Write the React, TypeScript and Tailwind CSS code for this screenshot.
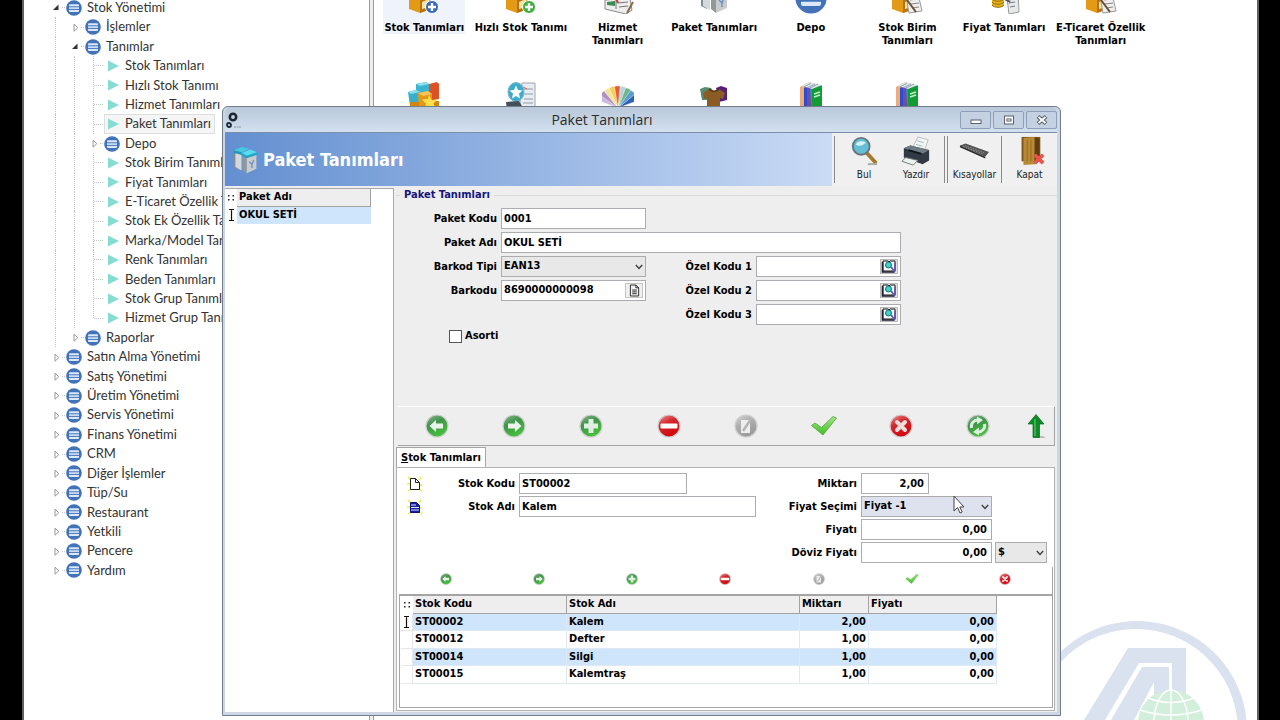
import React, { useId } from "react";

/* ---------- tree ---------- */

type Kind = "open" | "closed" | "leaf" | "last";
type Node = { label: string; depth: number; kind: Kind; selected?: boolean };

const tree: Node[] = [
  { label: "Stok Yönetimi", depth: 0, kind: "open" },
  { label: "İşlemler", depth: 1, kind: "closed" },
  { label: "Tanımlar", depth: 1, kind: "open" },
  { label: "Stok Tanımları", depth: 2, kind: "leaf" },
  { label: "Hızlı Stok Tanımı", depth: 2, kind: "leaf" },
  { label: "Hizmet Tanımları", depth: 2, kind: "leaf" },
  { label: "Paket Tanımları", depth: 2, kind: "leaf", selected: true },
  { label: "Depo", depth: 2, kind: "closed" },
  { label: "Stok Birim Tanımları", depth: 2, kind: "leaf" },
  { label: "Fiyat Tanımları", depth: 2, kind: "leaf" },
  { label: "E-Ticaret Özellik Tanımları", depth: 2, kind: "leaf" },
  { label: "Stok Ek Özellik Tanımları", depth: 2, kind: "leaf" },
  { label: "Marka/Model Tanımları", depth: 2, kind: "leaf" },
  { label: "Renk Tanımları", depth: 2, kind: "leaf" },
  { label: "Beden Tanımları", depth: 2, kind: "leaf" },
  { label: "Stok Grup Tanımları", depth: 2, kind: "leaf" },
  { label: "Hizmet Grup Tanımları", depth: 2, kind: "last" },
  { label: "Raporlar", depth: 1, kind: "closed" },
  { label: "Satın Alma Yönetimi", depth: 0, kind: "closed" },
  { label: "Satış Yönetimi", depth: 0, kind: "closed" },
  { label: "Üretim Yönetimi", depth: 0, kind: "closed" },
  { label: "Servis Yönetimi", depth: 0, kind: "closed" },
  { label: "Finans Yönetimi", depth: 0, kind: "closed" },
  { label: "CRM", depth: 0, kind: "closed" },
  { label: "Diğer İşlemler", depth: 0, kind: "closed" },
  { label: "Tüp/Su", depth: 0, kind: "closed" },
  { label: "Restaurant", depth: 0, kind: "closed" },
  { label: "Yetkili", depth: 0, kind: "closed" },
  { label: "Pencere", depth: 0, kind: "closed" },
  { label: "Yardım", depth: 0, kind: "closed" },
];

function MenuDisc({ className = "size-4" }: { className?: string }) {
  return (
    <svg viewBox="0 0 16 16" className={`${className} shrink-0`}>
      <circle cx="8" cy="8" r="7.8" fill="#4272b8" />
      <rect x="3" y="4.2" width="10" height="7.8" rx="1" fill="#dbe8f8" />
      <path d="M3 6.8h10M3 9.4h10" stroke="#4272b8" strokeWidth="1" />
    </svg>
  );
}

function Expander({ kind }: { kind: Kind }) {
  return (
    <svg viewBox="0 0 19 19" className="h-[19px] w-[19px] shrink-0">
      {kind === "open" && <path d="M11.5 6.5v5.5H6z" fill="#333" />}
      {kind === "closed" && <path d="M8 6.2v7l3.8-3.5z" fill="#fff" stroke="#999" />}
      {(kind === "open" || kind === "closed") && <path d="M15 9.5h4" stroke="#c8c8c8" strokeDasharray="1 1" />}
      {(kind === "leaf" || kind === "last") && (
        <>
          <path d={kind === "last" ? "M8.5 0v10" : "M8.5 0v19"} stroke="#c4c4c4" strokeDasharray="1 1" />
          <path d="M9 9.5h9" stroke="#c4c4c4" strokeDasharray="1 1" />
        </>
      )}
    </svg>
  );
}

function TreeRow({ node }: { node: Node }) {
  const leaf = node.kind === "leaf" || node.kind === "last";
  return (
    <li className="flex min-h-0 flex-1 items-center whitespace-nowrap">
      {Array.from({ length: node.depth }, (_, i) => (
        <span key={i} className="flex w-[19px] shrink-0 self-stretch pl-2">
          <span className="border-l border-dotted border-[#c4c4c4]" />
        </span>
      ))}
      <Expander kind={node.kind} />
      <a
        href="#"
        className={
          node.selected
            ? "flex h-5 items-center gap-[5px] bg-[#f5f5f5] pr-1 outline outline-1 -outline-offset-1 outline-[#dedede]"
            : "flex h-5 items-center gap-[5px]"
        }
      >
        {leaf ? (
          <svg viewBox="0 0 16 16" className="size-4 shrink-0">
            <path d="M4 2.5v11L15 8z" fill="#84dcd3" />
          </svg>
        ) : (
          <MenuDisc />
        )}
        {node.label}
      </a>
    </li>
  );
}

/* ---------- launcher icons ---------- */

function BoxArt({ badge }: { badge: string }) {
  return (
    <g>
      <path d="M1 8l12-4 10 3v20l-11 4-11-4z" fill="#e39a17" />
      <path d="M12 11l11-4v20l-11 4z" fill="#b8730d" />
      <path d="M1 8l11 3 11-4-10-3z" fill="#f8cc62" />
      <path d="M14 20l7-3v8l-7 2z" fill="#f6e3a8" />
      {badge === "paper" ? (
        <>
          <path d="M14 9l12-2 5 22-13 2z" fill="#eeeeee" stroke="#999" />
          <path d="M18 14l8-1M19 18l8-1M20 22l8-1M21 26l7-1" stroke="#888" />
          <path d="M16 18l9 12" stroke="#6a5132" strokeWidth="2" />
        </>
      ) : (
        <>
          <circle cx="24" cy="25" r="6.5" fill={badge} stroke="#fff" />
          <path d="M20 25h8M24 21v8" stroke="#fff" strokeWidth="2.4" />
        </>
      )}
    </g>
  );
}

function PackageArt() {
  return (
    <g>
      <path d="M3 5l6-2v24l-6-3z" fill="#7f8f96" />
      <path d="M5 7l7 3v18l-7-4z" fill="#d3d9dc" />
      <path d="M3 5l9-4 9 2-9 4z" fill="#3fcbe2" />
      <path d="M3 5l9 2v3L3 8z" fill="#2397b4" />
      <path d="M13 10l5 2v19l-5-4z" fill="#8f989c" />
      <path d="M18 11l11-3v18l-11 5z" fill="#c9cbcc" />
      <path d="M12 8l10-4 8 3-12 4z" fill="#55dcee" />
      <path d="M12 8l6 3 12-4v3l-12 4-6-3z" fill="#25a5c5" />
      <path d="M21 18l3 3 2-5M24 21v4" stroke="#638fc2" strokeWidth="1.4" fill="none" />
    </g>
  );
}

function BooksArt() {
  return (
    <g>
      <path d="M5 5l7-4v28l-7 3z" fill="#efaa7b" />
      <path d="M9 6l8-5v29l-8 2z" fill="#294ed0" />
      <path d="M12 7l7-5v29l-7 1z" fill="#774aa2" />
      <path d="M15 8l7-6 4 2v27l-9 1z" fill="#2a8de0" />
      <path d="M17 7l10-4v27l-10 2z" fill="#119b35" />
      <path d="M6 4l8-4 13 3-10 4-3-1z" fill="#dfe6e2" />
      <path d="M9 5l7-4M12 6l8-4M15 6l8-4" stroke="#7e8fa8" strokeWidth=".8" />
      <path d="M19 12l6-2M19 15l6-2" stroke="#c4f1c9" strokeWidth="1.6" />
    </g>
  );
}

const fanColors = ["#c9b9dd", "#b48fc1", "#efe59a", "#f6cf5a", "#e45c3f", "#b7d4dc", "#6fb68a", "#5b9bd2", "#2e62b8"];

function LauncherArt({ name }: { name: string }) {
  switch (name) {
    case "box-blue":
      return <BoxArt badge="#3568c0" />;
    case "box-green":
      return <BoxArt badge="#3daf3b" />;
    case "box-paper":
      return <BoxArt badge="paper" />;
    case "package":
      return <PackageArt />;
    case "books":
      return <BooksArt />;
    case "service":
      return (
        <g>
          <path d="M3 8l23-3 4 23-6 4L3 27z" fill="#eeeeee" stroke="#888" />
          <path d="M5 20l8-1v5l-8-1z" fill="#388c55" />
          <path d="M14 10v17M3 18l25-2M16 21l10-1M17 25l9-1" stroke="#777" />
          <path d="M13 14l3 7" stroke="#d33" strokeWidth="2" />
          <path d="M31 20l-6 11" stroke="#8b6b45" strokeWidth="2" />
        </g>
      );
    case "price":
      return (
        <g>
          <path d="M4 14v9c0 3 12 3 12 0v-9z" fill="#e6b31d" />
          <path d="M4 17c2 3 10 3 12 0M4 20c2 3 10 3 12 0M4 23c2 3 10 3 12 0" stroke="#94690b" fill="none" />
          <ellipse cx="10" cy="14" rx="6" ry="2.5" fill="#ffe06a" />
          <path d="M18 8l12-1 1 23-10 2z" fill="#e6e9ec" stroke="#999" />
          <path d="M21 18l6-1M21 21l6-1M22 25l5-1" stroke="#777" />
          <path d="M13 15l9 5" stroke="#555" strokeWidth="2" />
        </g>
      );
    case "cubes":
      return (
        <g>
          <path d="M8 2l10-2 3 2v12H8z" fill="#3bb5cf" />
          <path d="M21 2l8-2 2 2v15l-10 2z" fill="#dc5225" />
          <path d="M0 10l8-2 4 2v16l-10-2z" fill="#38afcb" />
          <path d="M10 11l10-2 4 3v19H11z" fill="#e29a16" />
          <path d="M2 20h9v10H2zM22 19h9v12h-9z" fill="#d3860f" />
          <path d="M8 2l10-2 3 2-9 2zM0 10l8-2 4 2-9 2z" fill="#8be0ee" />
          <path d="M10 11l10-2 4 3-9 2z" fill="#f4c45a" />
          <path d="M21 13l2.5 5 6-.5-4 4 2.5 5.5-6-2.5-5 3 1-6-4-4 6-.5z" fill="#ffe04b" />
        </g>
      );
    case "globe":
      return (
        <g>
          <path d="M17 1h13v30H14z" fill="#e8edf3" stroke="#9aa5b1" />
          <path d="M19 7h9M19 12h9M19 17h9M18 21h10M18 25h9" stroke="#aeb6bf" strokeWidth="1.6" />
          <path d="M18 5l4 2" stroke="#d55" />
          <ellipse cx="11" cy="10" rx="8" ry="9.5" fill="#3daccc" stroke="#7fb4c9" />
          <path d="M11 3.5l2 4.5 4.5.5-3.5 3 1 5-4-2.5-4 2.5 1-5-3.5-3 4.5-.5z" fill="#fff" />
          <path d="M1 20l13-1 3 5-15 4z" fill="#44505a" />
        </g>
      );
    case "fan":
      return (
        <g>
          {fanColors.map((c, i) => (
            <path key={c} d="M16 27L12.500 5.500q3.500-1.500 7 0z" fill={c} stroke="#fff" strokeWidth=".4" transform={`translate(0 -1) scale(1) rotate(${i * 15 - 60} 16 27) `} />
          ))}
        </g>
      );
    case "shirts":
      return (
        <g>
          <path d="M2 7l5-2 6 1 3 4v8H4z" fill="#568b75" />
          <path d="M18 6l5-2 6 2v12l-8 2z" fill="#57207c" />
          <path d="M5 11l6-4c3 2 7 2 10 0l6 4-2 6-3-1v15H9V16l-3 1z" fill="#8a5c23" />
          <path d="M11 7c3 3 7 3 10 0" stroke="#4d3212" fill="none" strokeWidth="1.6" />
        </g>
      );
    default:
      return null;
  }
}

const launchers = [
  { label: "Stok Tanımları", icon: "box-blue" },
  { label: "Hızlı Stok Tanımı", icon: "box-green" },
  { label: "Hizmet\nTanımları", icon: "service" },
  { label: "Paket Tanımları", icon: "package" },
  { label: "Depo", icon: "disc" },
  { label: "Stok Birim\nTanımları", icon: "box-paper" },
  { label: "Fiyat Tanımları", icon: "price" },
  { label: "E-Ticaret Özellik\nTanımları", icon: "box-paper" },
  { label: "", icon: "cubes" },
  { label: "", icon: "globe" },
  { label: "", icon: "fan" },
  { label: "", icon: "shirts" },
  { label: "", icon: "books" },
  { label: "", icon: "books" },
];

function Launcher({ label, icon, first }: { label: string; icon: string; first: boolean }) {
  return (
    <button type="button" className="flex h-[100px] flex-col items-center text-center">
      <span
        className={
          first
            ? "flex flex-col items-center gap-[7px] bg-[#eff3fc] px-[1px]"
            : "flex flex-col items-center gap-[7px]"
        }
      >
        {icon === "disc" ? (
          <MenuDisc className="size-8" />
        ) : (
          <svg viewBox="0 0 32 32" className="size-8">
            <LauncherArt name={icon} />
          </svg>
        )}
        {label && <span className="leading-[13px] whitespace-pre">{label}</span>}
      </span>
    </button>
  );
}

function Watermark() {
  return (
    <svg viewBox="0 0 200 100" className="absolute right-0 bottom-0 h-[100px] w-[200px]">
      <path
        fillRule="evenodd"
        fill="#dbe2ef"
        d="M80 1a110 110 0 1 0 .1 0zM79 9a102 102 0 1 1-.1 0z"
      />
      <path fill="#dbe2ef" d="M71 28h58v46q-6-3-14-3V43H82L48 100H27z" />
      <path fill="#dbe2ef" d="M85 47h27v25q-8 0-15 4V62L77 100H54z" />
      <circle cx="114" cy="103" r="33" fill="#d3efdb" />
      <g fill="none" stroke="#fff" strokeWidth="1.4">
        <path d="M114 70v33M83 90q31 10 62 0M91 78q23 9 46 0" />
        <ellipse cx="114" cy="103" rx="17" ry="33" />
      </g>
    </svg>
  );
}

/* ---------- dialog icons ---------- */

type Action = "prev" | "next" | "add" | "remove" | "edit" | "ok" | "cancel" | "refresh" | "up";

const actionTitles: Record<Action, string> = {
  prev: "Önceki",
  next: "Sonraki",
  add: "Ekle",
  remove: "Sil",
  edit: "Düzenle",
  ok: "Kaydet",
  cancel: "İptal",
  refresh: "Yenile",
  up: "Yukarı",
};

function ActionIcon({ name, className }: { name: Action; className: string }) {
  const id = useId();
  const tones =
    name === "remove" || name === "cancel"
      ? ["#ee9a9a", "#d3262b", "#d2080f"]
      : name === "edit"
        ? ["#d9d9d9", "#aeaeae", "#9a9a9a"]
        : ["#8fb796", "#3f9448", "#45c03c"];
  const arrow = "M4.500 12l6.500-6v3.500h7v5h-7V18z";
  return (
    <svg viewBox="0 0 24 24" className={className}>
      <defs>
        <linearGradient id={id} x1="0" y1="0" x2="0.5" y2="1">
          <stop offset="0" stopColor={tones[0]} />
          <stop offset=".45" stopColor={tones[1]} />
          <stop offset="1" stopColor={tones[2]} />
        </linearGradient>
        <linearGradient id={`${id}c`} x1="0" y1="0" x2="0" y2="1">
          <stop offset="0" stopColor="#a5e58c" />
          <stop offset="1" stopColor="#3fbf1e" />
        </linearGradient>
      </defs>
      {name === "ok" ? (
        <path d="M-.5 11.500l3.500-2.500 6.500 4.500L21 2.500l3.500 1.500L11 21z" fill={`url(#${id}c)`} stroke="#4fa53a" strokeWidth=".8" />
      ) : name === "up" ? (
        <>
          <path d="M12 24h10l-3-2h-5z" fill="#b9bdb9" />
          <path d="M12 .5l8 9.500h-4.500v13.500H9V10H4z" fill="#0f8a28" stroke="#086a1c" strokeWidth=".7" />
          <path d="M11 5v17" stroke="#43bd54" strokeWidth="1.6" />
        </>
      ) : (
        <>
          <circle cx="12" cy="12" r="11" fill={`url(#${id})`} stroke="#cfcfcf" strokeWidth="1.2" />
          {name === "prev" && <path d={arrow} fill="#e9f3ea" />}
          {name === "next" && <path d={arrow} fill="#e9f3ea" transform="rotate(180 12 12)" />}
          {name === "add" && <path d="M9.5 5h5v4.5H19v5h-4.5V19h-5v-4.500H5v-5h4.500z" fill="#dfeee0" />}
          {name === "remove" && <rect x="3.5" y="9.5" width="17" height="5" rx="1" fill="#fff" />}
          {name === "edit" && (
            <>
              <path d="M7 6h9v13H7z" fill="#ededed" />
              <path d="M17 5l-8 12" stroke="#b5b5b5" strokeWidth="2.5" />
            </>
          )}
          {name === "cancel" && <path d="M8 8l8 8M16 8l-8 8" stroke="#ecdcdc" strokeWidth="4" strokeLinecap="round" />}
          {name === "refresh" && (
            <>
              <path d="M5.500 14a6.500 6.500 0 0 1 6.500-8M18.500 10a6.500 6.500 0 0 1-6.500 8" stroke="#dcefdc" strokeWidth="3" fill="none" />
              <path d="M11 2.500l6 3.500-6 4.500zM13 21.500L7 18l6-4.500z" fill="#dcefdc" />
            </>
          )}
        </>
      )}
    </svg>
  );
}

function ActionButton({ name, small }: { name: Action; small?: boolean }) {
  return (
    <button type="button" aria-label={actionTitles[name]} className="flex items-center justify-center">
      <ActionIcon name={name} className={small ? "size-3 overflow-visible" : "size-6 overflow-visible"} />
    </button>
  );
}

function ToolButton({ label, className, children }: { label: string; className: string; children: React.ReactNode }) {
  return (
    <button type="button" className={`flex flex-col items-center gap-[3px] ${className}`}>
      <svg viewBox="0 0 32 32" className="size-[30px]">
        {children}
      </svg>
      <span className="text-[10px] leading-3 font-normal text-[#222]">{label}</span>
    </button>
  );
}

/* ---------- form parts ---------- */

const box = "h-[21px] min-w-0 border border-[#abadb3] bg-white px-[2px] outline-none";

function Field({
  label,
  labelClass,
  inputClass,
  value,
  right,
  extra,
}: {
  label: string;
  labelClass: string;
  inputClass: string;
  value?: string;
  right?: boolean;
  extra?: React.ReactNode;
}) {
  const id = useId();
  return (
    <div className="flex h-5 items-center gap-1">
      <label htmlFor={id} className={`shrink-0 pt-[2px] text-right whitespace-nowrap ${labelClass}`}>
        {label}
      </label>
      {extra ? (
        <div className={`flex items-center ${box} ${inputClass}`}>
          <input id={id} defaultValue={value} className="min-w-0 flex-1 bg-transparent outline-none" />
          {extra}
        </div>
      ) : (
        <input id={id} defaultValue={value} className={`${box} ${inputClass} ${right ? "pr-1 text-right" : ""}`} />
      )}
    </div>
  );
}

function Drop({ id, label, value, className }: { id?: string; label?: string; value: string; className: string }) {
  return (
    <span className={`relative flex h-[21px] ${className}`}>
      <select id={id} aria-label={label} className="w-full appearance-none border border-[#acacac] bg-transparent px-[2px] outline-none">
        <option>{value}</option>
      </select>
      <svg viewBox="0 0 8 6" className="pointer-events-none absolute top-[8px] right-[3px] h-[6px] w-2">
        <path d="M.8 1L4 4.5 7.2 1" fill="none" stroke="#444" strokeWidth="1.5" />
      </svg>
    </span>
  );
}

function LookupButton({ label }: { label: string }) {
  return (
    <button type="button" aria-label={label} className="flex h-[15px] w-[18px] shrink-0 items-center justify-center border border-[#bbb] bg-[#e4e4e4]">
      <svg viewBox="0 0 16 14" className="h-[14px] w-4">
        <path d="M2 2h5l1 1 1-1h5v10H2z" fill="#fff" stroke="#111" />
        <path d="M1.500 3v10h12" stroke="#223" strokeWidth="1.6" fill="none" />
        <path d="M10 8l4 5M14 4v8" stroke="#5e5aa8" strokeWidth="1.8" />
        <circle cx="7.5" cy="6" r="3" fill="#35d5d0" stroke="#176e78" />
      </svg>
    </button>
  );
}

function NewDocIcon({ filled }: { filled?: boolean }) {
  return (
    <svg viewBox="0 0 16 16" className="size-4">
      <path d="M1 1l3 3M14 1l-2 3M0 8h3M15 9h-3M1 15l3-2M15 15l-3-2" stroke="#f3ea3a" strokeWidth="1.5" />
      {filled ? (
        <>
          <path d="M3.5 3.5h6l3 3v7h-9z" fill="#1620a0" stroke="#10106a" />
          <path d="M4 6h5M4 8.5h8M4 11h8" stroke="#dfe4ff" />
        </>
      ) : (
        <path d="M3.5 2.5h5l4 4v7h-9zM8.5 2.5v4h4" fill="#fff" stroke="#222" />
      )}
    </svg>
  );
}

function IBeam() {
  return (
    <svg viewBox="0 0 9 12" className="mx-auto h-3 w-[9px]">
      <path d="M2 .5h2l.5.5.5-.5h2M2 11.5h2l.5-.5.5.5h2M4.5 1v10" fill="none" stroke="#111" strokeWidth="1.2" />
    </svg>
  );
}

function Grip() {
  return (
    <svg viewBox="0 0 9 8" className="mx-auto h-2 w-[9px]">
      <path d="M1 1h1.500v1.500H1zM5.500 1H7v1.500H5.500zM1 5h1.500v1.500H1zM5.500 5H7v1.500H5.500z" fill="#222" />
    </svg>
  );
}

const head = "border-r border-b border-[#a3a3a3] bg-[#eeeeee] px-[2px] text-left font-bold";

const stockRows = [
  ["ST00002", "Kalem", "2,00", "0,00"],
  ["ST00012", "Defter", "1,00", "0,00"],
  ["ST00014", "Silgi", "1,00", "0,00"],
  ["ST00015", "Kalemtraş", "1,00", "0,00"],
];

const caption = "flex h-[18px] w-[31px] items-center justify-center rounded-[2px] border border-[#8e9fb6] bg-[#c3d1e3]";

function Dialog() {
  const typeId = useId();
  const priceId = useId();
  return (
    <section
      aria-label="Paket Tanımları"
      className="absolute top-[106px] left-[222px] flex h-[610px] w-[839px] flex-col rounded-t-md border border-[#737d89] bg-[#cbd7e5] pr-[3px] pb-[3px] pl-[2px]"
    >
      <header className="flex h-[25px] shrink-0 items-center rounded-t-md bg-linear-to-b from-[#b9c8da] to-[#d2e0ef]">
        <svg viewBox="0 0 18 18" className="ml-[1px] size-[18px]">
          <circle cx="7" cy="6" r="3.2" fill="none" stroke="#1c2733" strokeWidth="2.6" />
          <circle cx="3" cy="14" r="2" fill="none" stroke="#1c2733" strokeWidth="1.8" />
          <path d="M8 16h7" stroke="#8d98a5" strokeDasharray="2 .5" />
        </svg>
        <h2 className="flex-1 text-center font-['Open_Sans',sans-serif] text-[14px] font-normal text-[#2b2b2b]">Paket Tanımları</h2>
        <div className="flex gap-[2px]">
          <button type="button" aria-label="Küçült" className={caption}>
            <svg viewBox="0 0 12 10" className="h-[10px] w-3">
              <rect x="1" y="5" width="10" height="3.5" fill="#fff" stroke="#59616b" />
            </svg>
          </button>
          <button type="button" aria-label="Ekranı kapla" className={caption}>
            <svg viewBox="0 0 12 10" className="h-[10px] w-3">
              <rect x="1.5" y="1" width="9" height="8" fill="#fff" stroke="#59616b" />
              <rect x="4" y="4" width="4" height="2" fill="#fff" stroke="#59616b" />
            </svg>
          </button>
          <button type="button" aria-label="Kapat" className={caption}>
            <svg viewBox="0 0 12 10" className="h-[10px] w-3">
              <path d="M2 1.500l8 7M10 1.500l-8 7" stroke="#59616b" strokeWidth="4" />
              <path d="M2.500 2l7 6M9.500 2l-7 6" stroke="#fff" strokeWidth="1.8" />
            </svg>
          </button>
        </div>
      </header>

      <div className="flex h-[54px] shrink-0 border-t border-[#7d8fa8] bg-[#f0f0f0]">
        <div className="flex flex-1 items-center gap-1 bg-linear-to-r from-[#638fd0] to-[#cadbf5] pl-[6px]">
          <svg viewBox="0 0 32 32" className="size-7">
            <PackageArt />
          </svg>
          <h1 className="text-[18px] font-bold text-white">Paket Tanımları</h1>
        </div>
        <div className="flex py-[3px] pl-[2px]">
          <div className="flex w-[110px] border-l border-[#8a8a8a] pl-1">
            <ToolButton label="Bul" className="w-[50px]">
              <path d="M18 17l11 12" stroke="#a27a28" strokeWidth="4" />
              <path d="M20 30h10" stroke="#aaa" strokeWidth="2" />
              <circle cx="13" cy="11" r="9" fill="#64bfd4" stroke="#66757e" strokeWidth="2" />
              <path d="M7 9a7 6 0 0 1 11-2c-4 4-8 4-11 2z" fill="#d5f2f8" />
            </ToolButton>
            <ToolButton label="Yazdır" className="w-[54px]">
              <path d="M12 13L18 1l11 3-4 12z" fill="#f2f5f6" stroke="#b6bdc1" />
              <path d="M17 5l7 2M16 9l7 2" stroke="#a8b4bb" />
              <path d="M3 13l7-3 20 5v11l-7 4-20-7z" fill="#313a42" />
              <path d="M3 13l7-3 20 5-7 4z" fill="#6e7b85" />
              <path d="M8 15l14 4" stroke="#10151a" strokeWidth="2" />
              <path d="M5 23l13 3-5 5-12-4z" fill="#eef1f2" stroke="#777" />
            </ToolButton>
          </div>
          <div className="flex w-[57px] justify-center border-l-4 border-double border-[#8a8a8a]">
            <ToolButton label="Kısayollar" className="">
              <path d="M1 10l6-2 25 9-4 5z" fill="#535353" />
              <path d="M1 10l27 12v2L1 12z" fill="#262626" />
              <path d="M6 10l21 8M4 11l21 8" stroke="#8c8c8c" strokeDasharray="2 1" />
            </ToolButton>
          </div>
          <div className="flex w-[56px] justify-center border-l border-[#8a8a8a]">
            <ToolButton label="Kapat" className="">
              <path d="M7 1h20v26H7z" fill="#7f561a" />
              <path d="M9 2l12-1v29l-12 1z" fill="#b98a36" />
              <path d="M21 1l5 2v24l-5 3z" fill="#5f3d10" />
              <path d="M13 4v23M17 4v23" stroke="#94682a" />
              <path d="M21 20l9 9M30 20l-9 9" stroke="#e8544c" strokeWidth="4" />
            </ToolButton>
          </div>
        </div>
      </div>

      <div className="flex min-h-0 flex-1 bg-[#eeeeee] pt-[2px]">
        <div className="w-[169px] shrink-0 border-t border-r border-[#a9a9a9] bg-white">
          <table className="w-[146px] border-separate border-spacing-0">
            <thead>
              <tr className="h-[17px]">
                <th className="w-3">
                  <Grip />
                </th>
                <th className={head}>Paket Adı</th>
              </tr>
            </thead>
            <tbody>
              <tr className="h-[17px]">
                <td>
                  <IBeam />
                </td>
                <td className="bg-[#cfe5fc] px-[2px]">OKUL SETİ</td>
              </tr>
            </tbody>
          </table>
        </div>

        <div className="flex min-w-0 flex-1 flex-col pl-[2px]">
          <div className="flex h-[218px] flex-col">
            <div className="flex items-center gap-1">
              <span className="w-1 border-t border-[#dcdcdc]" />
              <h3 className="leading-[14px] text-[#15157c]">Paket Tanımları</h3>
              <span className="flex-1 border-t border-[#dcdcdc]" />
            </div>
            <form className="flex flex-col gap-1 pt-[6px]">
              <Field label="Paket Kodu" labelClass="w-[101px]" inputClass="w-[145px]" value="0001" />
              <Field label="Paket Adı" labelClass="w-[101px]" inputClass="w-[400px]" value="OKUL SETİ" />
              <div className="flex gap-[18px]">
                <div className="flex flex-col gap-1">
                  <div className="flex h-5 items-center gap-1">
                    <label htmlFor={typeId} className="w-[101px] pt-[2px] text-right">
                      Barkod Tipi
                    </label>
                    <Drop id={typeId} value="EAN13" className="w-[145px] bg-[#e8e8e8]" />
                  </div>
                  <Field
                    label="Barkodu"
                    labelClass="w-[101px]"
                    inputClass="w-[145px]"
                    value="8690000000098"
                    extra={
                      <button type="button" aria-label="Barkod oluştur" className="flex h-[15px] w-[18px] shrink-0 items-center justify-center border border-[#c4c4c4] bg-[#f0f0f0]">
                        <svg viewBox="0 0 12 14" className="h-[13px] w-[11px]">
                          <path d="M1.500 1h6l3 3v9h-9zM7.500 1v3h3M3.500 6.500h5M3.500 8.500h5M3.500 10.500h5" fill="none" stroke="#222" />
                        </svg>
                      </button>
                    }
                  />
                </div>
                <div className="flex flex-col gap-1">
                  {[1, 2, 3].map((n) => (
                    <Field key={n} label={`Özel Kodu ${n}`} labelClass="w-[88px]" inputClass="w-[145px]" extra={<LookupButton label={`Özel Kodu ${n} ara`} />} />
                  ))}
                </div>
              </div>
              <label className="flex items-center gap-[3px] pl-[53px]">
                <input type="checkbox" className="size-[13px] appearance-none border border-[#555] bg-white" />
                Asorti
              </label>
            </form>
          </div>

          <div className="mr-[2px] ml-[2px] flex h-10 shrink-0 border-t border-r border-b border-t-white border-r-[#a5a5a5] border-b-[#a5a5a5]">
            <div className="grid flex-1 grid-cols-8">
              {(["prev", "next", "add", "remove", "edit", "ok", "cancel", "refresh"] as Action[]).map((a) => (
                <ActionButton key={a} name={a} />
              ))}
            </div>
            <div className="flex w-[37px] justify-center">
              <ActionButton name="up" />
            </div>
          </div>

          <div role="tablist" className="mt-[1px] flex h-5 shrink-0">
            <button type="button" role="tab" aria-selected="true" className="-mb-px border border-b-0 border-[#a5a5a5] bg-white px-1">
              <span className="underline">S</span>tok Tanımları
            </button>
          </div>

          <div className="mr-[2px] mb-[1px] flex min-h-0 flex-1 flex-col border border-[#b4b4b4] bg-white pr-[1px] pb-[2px] pl-[2px]">
            <form className="flex pt-[5px] pl-2">
              <div className="flex flex-col gap-[7px] pt-[3px]">
                <button type="button" aria-label="Yeni stok" className="h-4">
                  <NewDocIcon />
                </button>
                <button type="button" aria-label="Stok listesi" className="h-4">
                  <NewDocIcon filled />
                </button>
              </div>
              <div className="flex flex-1 flex-col gap-[3px]">
                <Field label="Stok Kodu" labelClass="w-[92px]" inputClass="w-[168px]" value="ST00002" />
                <Field label="Stok Adı" labelClass="w-[92px]" inputClass="w-[237px]" value="Kalem" />
              </div>
              <div className="flex flex-col gap-[3px] pr-[6px]">
                <Field label="Miktarı" labelClass="w-[80px]" inputClass="w-[68px]" value="2,00" right />
                <div className="flex h-5 items-center gap-1">
                  <label htmlFor={priceId} className="w-[80px] pt-[2px] text-right">
                    Fiyat Seçimi
                  </label>
                  <Drop id={priceId} value="Fiyat -1" className="w-[131px] bg-[#dde2ee]" />
                </div>
                <Field label="Fiyatı" labelClass="w-[80px]" inputClass="w-[131px]" value="0,00" right />
                <div className="flex h-5 items-center gap-[3px]">
                  <Field label="Döviz Fiyatı" labelClass="w-[80px]" inputClass="w-[131px]" value="0,00" right />
                  <Drop label="Döviz" value="$" className="w-[52px] bg-[#e8e8e8]" />
                </div>
              </div>
            </form>

            <div className="mt-[5px] grid h-[27px] shrink-0 grid-cols-7 border-r border-[#a5a5a5] pb-[3px]">
              {(["prev", "next", "add", "remove", "edit", "ok", "cancel"] as Action[]).map((a) => (
                <ActionButton key={a} name={a} small />
              ))}
            </div>

            <div className="min-h-0 flex-1 border-t-2 border-r border-b border-l border-[#a5a5a5] pl-[1px]">
              <table className="h-[88px] w-[596px] table-fixed border-separate border-spacing-0">
                <colgroup>
                  <col className="w-3" />
                  <col className="w-[154px]" />
                  <col className="w-[233px]" />
                  <col className="w-[69px]" />
                  <col />
                </colgroup>
                <thead>
                  <tr>
                    <th>
                      <Grip />
                    </th>
                    {["Stok Kodu", "Stok Adı", "Miktarı", "Fiyatı"].map((h) => (
                      <th key={h} className={head}>
                        {h}
                      </th>
                    ))}
                  </tr>
                </thead>
                <tbody>
                  {stockRows.map((r, i) => (
                    <tr key={r[0]}>
                      <td className="border-r border-b border-[#e6e6e6]">{i === 0 && <IBeam />}</td>
                      {r.map((c, j) => (
                        <td
                          key={j}
                          className={`${i % 2 === 0 ? "bg-[#cfe5fc]" : "bg-white"} ${j > 1 ? "pr-[2px] text-right" : "pl-[2px]"} border-r border-b border-[#dfe9f3]`}
                        >
                          {c}
                        </td>
                      ))}
                    </tr>
                  ))}
                </tbody>
              </table>
            </div>
          </div>
        </div>
      </div>

      <svg viewBox="0 0 12 20" className="pointer-events-none absolute top-[388px] left-[730px] h-5 w-3">
        <path d="M1 1v15l3.500-3.500L7 18l2.200-1-2.400-5H11z" fill="#fff" stroke="#444" />
      </svg>
    </section>
  );
}

export default function App() {
  return (
    <div className="relative h-screen overflow-hidden bg-black pr-[21px] pl-[22px] font-['DejaVu_Sans_Condensed','DejaVu_Sans',sans-serif] text-[11px] font-bold text-black">
      <main className="flex h-full border-x-2 border-[#5d6066] bg-white">
        <nav className="w-[345px] shrink-0 overflow-hidden pl-[23px] font-[Lato,sans-serif] text-[13px] font-normal text-[#333]">
          <ul className="-mt-[2px] flex h-[582px] flex-col">
            {tree.map((n, i) => (
              <TreeRow key={i} node={n} />
            ))}
          </ul>
        </nav>
        <div className="w-[5px] shrink-0 border-x border-[#9a9a9a] bg-[#eeeeee]" />
        <div className="relative min-w-0 flex-1 overflow-hidden">
          <div className="-mt-[18px] ml-[2px] grid max-w-[773px] grid-cols-8">
            {launchers.map((l, i) => (
              <Launcher key={i} label={l.label} icon={l.icon} first={i === 0} />
            ))}
          </div>
          <Watermark />
        </div>
      </main>
      <Dialog />
    </div>
  );
}
